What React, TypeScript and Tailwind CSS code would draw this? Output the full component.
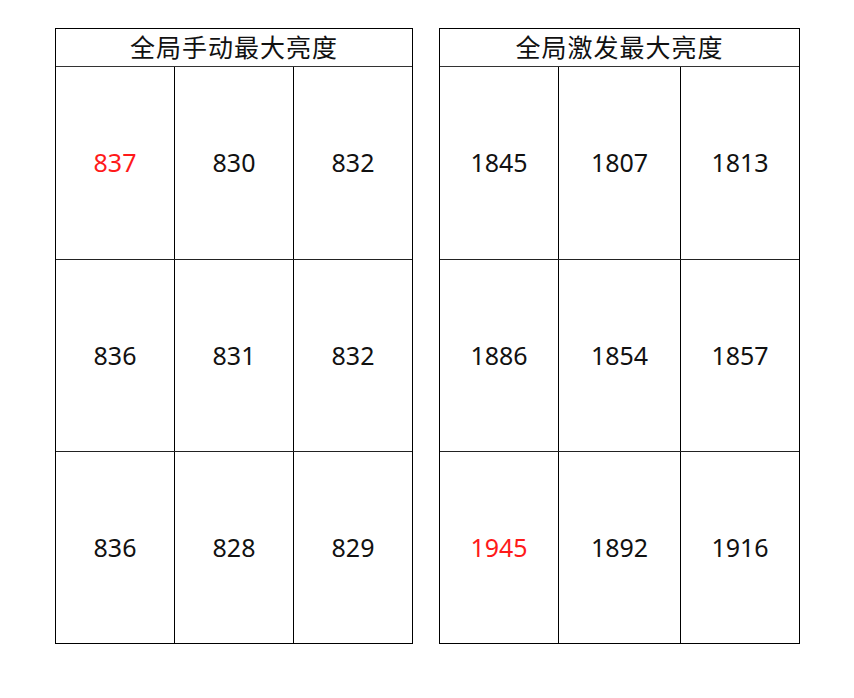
const tables = [
  {
    title: "全局手动最大亮度",
    width: "w-[358px]",
    cols: "grid-cols-[118px_119px_1fr]",
    rows: [
      [{ v: "837", red: true }, { v: "830" }, { v: "832" }],
      [{ v: "836" }, { v: "831" }, { v: "832" }],
      [{ v: "836" }, { v: "828" }, { v: "829" }],
    ],
  },
  {
    title: "全局激发最大亮度",
    width: "w-[361px]",
    cols: "grid-cols-[118px_122px_1fr]",
    rows: [
      [{ v: "1845" }, { v: "1807" }, { v: "1813" }],
      [{ v: "1886" }, { v: "1854" }, { v: "1857" }],
      [{ v: "1945", red: true }, { v: "1892" }, { v: "1916" }],
    ],
  },
];

type Cell = { v: string; red?: boolean };

export default function App() {
  return (
    <div
      className="min-h-[698px] w-[854px] bg-white pt-[28px] pl-[55px] flex gap-[26px] items-start"
      style={{ fontFamily: '"Noto Sans", "Noto Sans CJK SC", sans-serif' }}
    >
      {tables.map((t) => (
        <div key={t.title} className={`${t.width} border border-black`}>
          <div className="h-[38px] border-b border-[#333] flex items-center justify-center text-[25px] text-[#111] tracking-[1px]">
            {t.title}
          </div>
          {t.rows.map((row: Cell[], i) => (
            <div
              key={i}
              className={`grid ${t.cols} h-[192px] ${i > 0 ? "border-t border-[#222]" : ""}`}
            >
              {row.map((c, j) => (
                <div
                  key={j}
                  className={`flex items-center justify-center text-[25px] ${
                    j > 0 ? "border-l border-black" : ""
                  } ${c.red ? "text-[#ff1a1a]" : "text-[#111]"}`}
                >
                  {c.v}
                </div>
              ))}
            </div>
          ))}
        </div>
      ))}
    </div>
  );
}
